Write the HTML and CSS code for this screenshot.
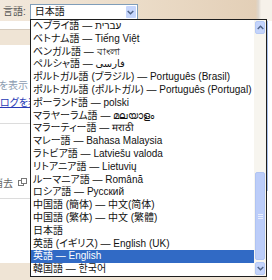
FILE: index.html
```html
<!DOCTYPE html>
<html lang="ja">
<head>
    <meta charset="UTF-8">
    <title>言語</title>
    <link rel="stylesheet" href="styles.css">
</head>
<body>
<div class="page">
    <div class="topbar">
        <span class="label">言語:</span>
        <div class="select">
            <span class="select-value">日本語</span>
            <span class="select-arrow">
                <svg width="7" height="5" viewBox="0 0 7 5"><path d="M0.7 1 L3.5 3.8 L6.3 1" stroke="#4d6185" stroke-width="1.4" fill="none"/></svg>
            </span>
        </div>
    </div>
    <div class="content">
        <div class="main">
            <div class="gap"></div>
            <div class="band"></div>
            <div class="note"><span>履歴を表示</span></div>
            <div class="link-row"><a class="link">ログを表示</a></div>
            <div class="rule rule-first"></div>
            <div class="note clear-row">
                <span>履歴を消去</span>
                <svg width="9" height="8" viewBox="0 0 9 8"><rect x="0.5" y="2.5" width="5" height="5" fill="#fff" stroke="#777"/><rect x="3.5" y="0.5" width="5" height="5" fill="#fff" stroke="#777"/></svg>
            </div>
            <div class="rule rule-second"></div>
            <div class="fill"></div>
        </div>
        <div class="edge"></div>
    </div>

    <!-- open dropdown of the language select -->
    <div class="menu">
        <ul class="options">
            <li>ヘブライ語 — עברית</li>
            <li>ベトナム語 — Tiếng Việt</li>
            <li>ベンガル語 — বাংলা</li>
            <li>ペルシャ語 — فارسی</li>
            <li>ポルトガル語 (ブラジル) — Português (Brasil)</li>
            <li>ポルトガル語 (ポルトガル) — Português (Portugal)</li>
            <li>ポーランド語 — polski</li>
            <li>マラヤーラム語 — മലയാളം</li>
            <li>マラーティー語 — मराठी</li>
            <li>マレー語 — Bahasa Malaysia</li>
            <li>ラトビア語 — Latviešu valoda</li>
            <li>リトアニア語 — Lietuvių</li>
            <li>ルーマニア語 — Română</li>
            <li>ロシア語 — Русский</li>
            <li>中国語 (簡体) — 中文(简体)</li>
            <li>中国語 (繁体) — 中文 (繁體)</li>
            <li>日本語</li>
            <li>英語 (イギリス) — English (UK)</li>
            <li class="selected">英語 — English</li>
            <li>韓国語 — 한국어</li>
        </ul>
        <div class="scrollbar">
            <div class="scroll-btn">
                <svg width="7" height="5" viewBox="0 0 7 5"><path d="M0.7 4 L3.5 1.2 L6.3 4" stroke="#4d6185" stroke-width="1.4" fill="none"/></svg>
            </div>
            <div class="scroll-track"></div>
            <div class="scroll-thumb">
                <span class="grip"></span>
                <span class="grip"></span>
                <span class="grip"></span>
            </div>
            <div class="scroll-btn scroll-down">
                <svg width="7" height="5" viewBox="0 0 7 5"><path d="M0.7 1 L3.5 3.8 L6.3 1" stroke="#4d6185" stroke-width="1.4" fill="none"/></svg>
            </div>
        </div>
    </div>
</div>
</body>
</html>
```

FILE: styles.css
```css
body {
    margin: 0;
    width: 272px;
    height: 280px;
    overflow: hidden;
    background-color: #ffffff;
    font-family: "Liberation Sans", "Noto Sans CJK JP", "DejaVu Sans", sans-serif;
    font-size: 10px;
    font-feature-settings: "palt";
    color: #111;
}

.page {
    position: relative;
    height: 280px;
    display: flex;
    flex-direction: column;
}

.topbar {
    display: flex;
    align-items: flex-start;
    gap: 4px;
    height: 21px;
    padding: 4px 0 0 3px;
    box-sizing: border-box;
    background: linear-gradient(to right, #f2e8dc 0, #ebdcc8 50%, #e3cfb7 94%, #ddd6cd 95%, #f6f1ea 96%);
}

.label {
    color: #555;
    line-height: 15px;
}

.select {
    display: flex;
    align-items: center;
    justify-content: space-between;
    width: 108px;
    height: 16px;
    border: 1px solid #7f9db9;
    box-sizing: border-box;
    background-color: #ffffff;
}

.select-value {
    padding-left: 4px;
    line-height: 14px;
}

.select-arrow {
    display: flex;
    align-items: center;
    justify-content: center;
    width: 10px;
    height: 12px;
    margin-right: 1px;
    background-color: #c6d6fc;
    border-radius: 1px;
}

.content {
    flex: 1;
    display: flex;
}

.main {
    flex: 1;
    display: flex;
    flex-direction: column;
}

.gap {
    height: 8px;
}

.band {
    height: 15px;
    border-top: 1px solid #d6cbbd;
    background-color: #efe4d5;
}

.note {
    display: flex;
    justify-content: flex-end;
    align-items: center;
    gap: 3px;
    width: 28px;
    height: 12px;
    margin-top: 33px;
    overflow: hidden;
    white-space: nowrap;
    color: #8b9bb0;
}

.note span,
.note svg {
    flex-shrink: 0;
}

.link-row {
    height: 12px;
    margin-top: 7px;
    line-height: 12px;
    white-space: nowrap;
}

.link {
    color: #2a3bb6;
    text-decoration: underline;
}

.rule {
    border-top: 1px solid #dcdcdc;
}

.rule-first {
    margin-top: 14px;
}

.clear-row {
    width: 27px;
    gap: 5px;
    margin-top: 52px;
    color: #666;
}

.rule-second {
    margin-top: 10px;
}

.fill {
    margin-top: auto;
    height: 17px;
    background-color: #efe4d5;
}

.edge {
    width: 4px;
    height: 170px;
    border-left: 1px solid #aac0ea;
}

.menu {
    position: absolute;
    left: 30px;
    top: 19px;
    width: 237px;
    height: 258px;
    display: flex;
    border: 1px solid #1e1e1e;
    box-sizing: border-box;
    background-color: #ffffff;
}

.options {
    flex: 1;
    list-style: none;
    margin: 0;
    padding: 0;
    overflow: hidden;
}

.options li {
    height: 12.8px;
    line-height: 12.8px;
    padding-left: 2px;
    white-space: nowrap;
    overflow: hidden;
}

.options li.selected {
    background-color: #316ac5;
    color: #ffffff;
}

.scrollbar {
    width: 12px;
    display: flex;
    flex-direction: column;
    background-color: #f7f5ef;
}

.scroll-btn {
    display: flex;
    align-items: center;
    justify-content: center;
    height: 11px;
    margin: 1px 1px 0;
    background-color: #c4d4fb;
    border: 1px solid #b5c9f5;
    border-radius: 2px;
}

.scroll-track {
    height: 138px;
}

.scroll-thumb {
    display: flex;
    flex-direction: column;
    align-items: center;
    justify-content: center;
    gap: 1px;
    height: 86px;
    margin: 0 1px;
    background-color: #bccdf9;
    border: 1px solid #b0c4f2;
    border-radius: 2px;
}

.grip {
    width: 5px;
    height: 1px;
    background-color: #e8eefc;
}

.scroll-down {
    margin-top: auto;
    margin-bottom: 1px;
}
```
